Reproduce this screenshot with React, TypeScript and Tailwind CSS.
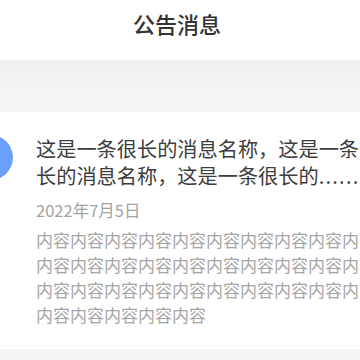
import React from 'react';

const notice = {
  title: '这是一条很长的消息名称，这是一条很长的消息名称，这是一条很长的',
  date: '2022年7月5日',
  content: '内容'.repeat(35),
};

const App = () => {
  return (
    <div className="w-[360px] h-[360px] overflow-hidden bg-[#f5f5f5] font-['Noto_Sans_CJK_SC',sans-serif]">
      {/* Header */}
      <div className="h-[60px] bg-white flex justify-center pt-[9px] pr-[6px]">
        <h1 className="text-[22px] leading-[28px] font-medium text-[#333333]">公告消息</h1>
      </div>

      {/* Spacer band */}
      <div className="h-[52px] bg-gradient-to-b from-[#f0f0f0] to-[#f6f6f6]" />

      {/* Notice card */}
      <div className="bg-white flex items-start gap-[23px] pt-[23px] pb-[22px]">
        <div className="w-[45px] h-[45px] shrink-0 -ml-[32px] rounded-full bg-[#6b9ffa]" />
        <div className="w-[346px] shrink-0">
          <p className="text-[20.2px] leading-[27px] text-[#3d3d3d]">
            {notice.title}
            <span className="tracking-[1.2px]">......</span>
          </p>
          <p className="mt-[9px] text-[16.5px] leading-[24px] text-[#a3a3a3]">{notice.date}</p>
          <p className="mt-[5px] text-[17px] leading-[25px] text-[#a6a6a6] break-all">{notice.content}</p>
        </div>
      </div>
    </div>
  );
};

export default App;
